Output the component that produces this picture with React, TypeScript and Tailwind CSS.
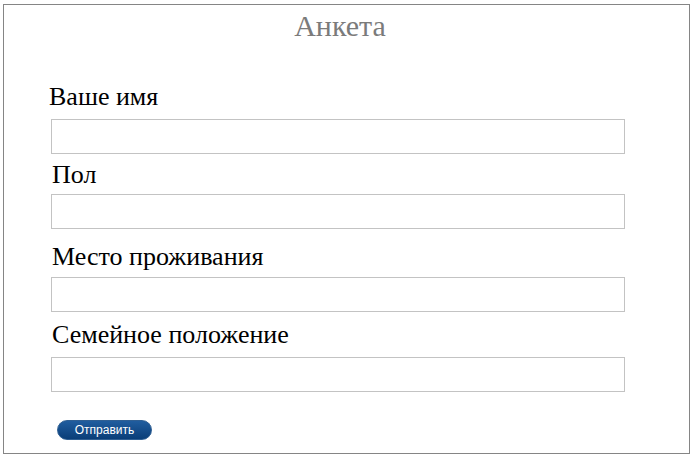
type Field = { label: string; labelCls: string; inputCls: string };

const fields: Field[] = [
  { label: "Ваше имя", labelCls: "mt-[77px] ml-[-2px]", inputCls: "mt-[7px]" },
  { label: "Пол", labelCls: "mt-[6px] ml-[1px]", inputCls: "mt-[4px]" },
  { label: "Место проживания", labelCls: "mt-[13px] ml-[1px]", inputCls: "mt-[5px]" },
  { label: "Семейное положение", labelCls: "mt-[8px] ml-[1px]", inputCls: "mt-[7px]" },
];

function Label({ text, cls }: { text: string; cls: string }) {
  return (
    <span className={"block font-['Liberation_Serif'] text-[26px] leading-[30px] text-black " + cls}>{text}</span>
  );
}

export default function App() {
  return (
    <div className="w-[693px] h-[457px] bg-white pt-[4px] pl-[3px]">
      <div className="relative w-[687px] h-[450px] border border-[#858585]">
        <h1 className="absolute left-0 right-[13px] top-[3px] text-center font-['Liberation_Serif'] text-[30px] leading-[36px] text-[#7b7b7b]">
          Анкета
        </h1>
        <div className="flex flex-col items-start pl-[47px]">
          {fields.map((f) => (
            <div key={f.label} className="contents">
              <Label text={f.label} cls={f.labelCls} />
              <input
                type="text"
                className={"w-[574px] h-[35px] border border-[#c3c3c3] bg-white outline-none " + f.inputCls}
              />
            </div>
          ))}
          <button
            type="button"
            className="mt-[28px] ml-[6px] w-[95px] h-[20px] rounded-full border border-[#2f5f93] bg-gradient-to-b from-[#205d9f] to-[#0a3e78] text-white text-[12px] leading-[18px] font-['Liberation_Sans']"
          >
            Отправить
          </button>
        </div>
      </div>
    </div>
  );
}
